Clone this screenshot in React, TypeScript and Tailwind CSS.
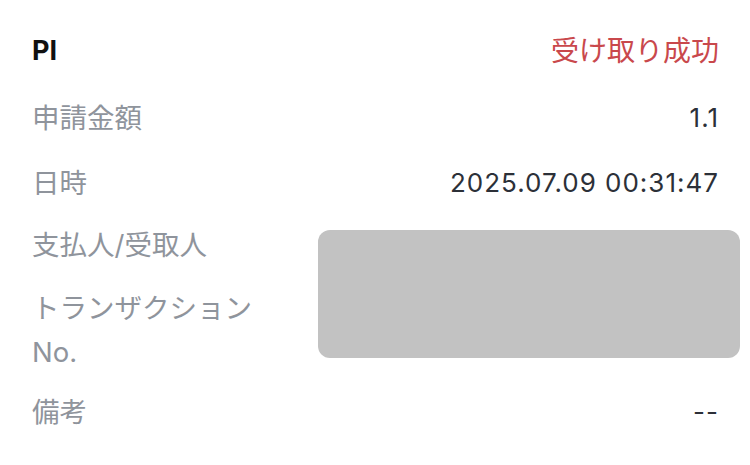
import React from "react";

const font = { fontFamily: 'Inter, "Noto Sans CJK JP", sans-serif' };

const Row = ({ label, value, className = "" }: { label: React.ReactNode; value?: React.ReactNode; className?: string }) => (
  <div className={`flex items-start justify-between ${className}`}>
    <div className="w-[236px] text-[27.5px] leading-[44px] text-[#8f949c]">{label}</div>
    <div className="text-[26px] leading-[44px] tracking-[1px] text-[#2c3038]">{value}</div>
  </div>
);

export default function App() {
  return (
    <div className="h-[465px] w-[750px] overflow-hidden bg-white pl-[32px] pr-[31px] pt-[29px]" style={font}>
      <div className="flex items-center justify-between">
        <div className="text-[27px] font-bold leading-[44px] text-[#111]">PI</div>
        <div className="text-[28px] leading-[44px] text-[#c9484c]">受け取り成功</div>
      </div>
      <Row className="mt-[23px]" label="申請金額" value="1.1" />
      <Row className="mt-[21px]" label="日時" value="2025.07.09 00:31:47" />
      <div className="relative">
        <Row className="mt-[18px]" label="支払人/受取人" />
        <Row className="mt-[19px]" label={<>トランザクション No.</>} />
        <div className="absolute right-[-21px] top-[7px] h-[128px] w-[422px] rounded-[12px] bg-[#c2c2c2]" />
      </div>
      <Row className="mt-[16px]" label="備考" value="--" />
    </div>
  );
}
